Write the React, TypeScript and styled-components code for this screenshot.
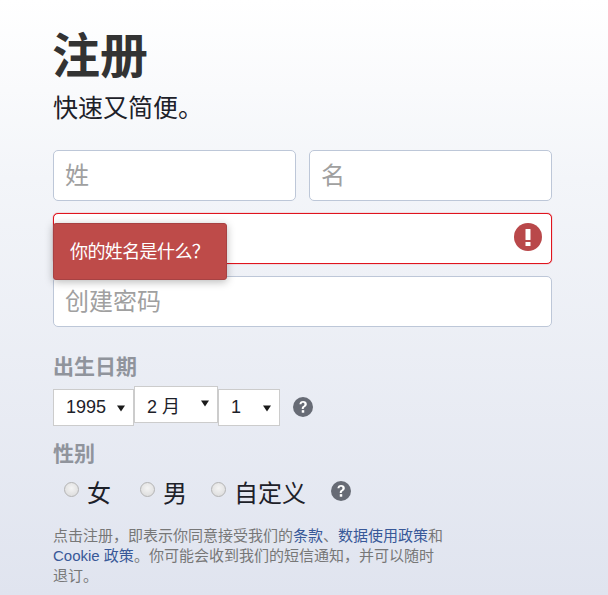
import React from 'react';
import styled, { createGlobalStyle } from 'styled-components';

const GlobalStyle = createGlobalStyle`
  html, body {
    margin: 0;
    padding: 0;
  }

  body {
    font-family: "Liberation Sans", "Noto Sans CJK SC", sans-serif;
  }
`;

const Page = styled.div`
  box-sizing: border-box;
  width: 608px;
  height: 595px;
  overflow: hidden;
  padding: 27px 56px 0 53px;
  background: linear-gradient(#ffffff 0%, #f3f5f9 30%, #e0e4ef 100%);
`;

const Title = styled.h1`
  margin: 0 0 0 -1px;
  font-size: 48px;
  line-height: 60px;
  font-weight: 700;
  color: #333333;
`;

const Subtitle = styled.div`
  margin-top: 3px;
  font-size: 25px;
  line-height: 36px;
  color: #1d2129;
`;

const Fields = styled.div`
  display: flex;
  flex-direction: column;
  gap: 12px;
  margin-top: 24px;
`;

const NameRow = styled.div`
  display: flex;
  gap: 13px;
`;

const FieldWrap = styled.div`
  position: relative;
  flex: 1;
  min-width: 0;
`;

const Input = styled.input<{ $error?: boolean }>`
  display: block;
  box-sizing: border-box;
  width: 100%;
  height: 51px;
  padding: 0 11px;
  border: 1px solid ${(p) => (p.$error ? '#e0141e' : '#bdc7d8')};
  border-radius: 5px;
  background: #ffffff;
  box-shadow: ${(p) => (p.$error ? '0 0 1px #e0141e' : 'none')};
  font-family: inherit;
  font-size: 24px;
  outline: none;

  &::placeholder {
    color: #a0a0a0;
    opacity: 1;
  }
`;

const ErrorIcon = styled.svg`
  position: absolute;
  top: 10px;
  right: 10px;
  width: 28px;
  height: 28px;
`;

const Tooltip = styled.div`
  position: absolute;
  z-index: 1;
  top: 10px;
  left: 0;
  box-sizing: border-box;
  width: 174px;
  height: 57px;
  padding: 0 0 3px 16px;
  display: flex;
  align-items: center;
  border: 1px solid #a74243;
  border-radius: 3px;
  background: #be4b49;
  box-shadow: 0 2px 8px rgba(0, 0, 0, 0.28);
  color: #ffffff;
  font-size: 18px;
  letter-spacing: -0.6px;
`;

const SectionLabel = styled.div<{ $top: number }>`
  margin-top: ${(p) => p.$top}px;
  font-size: 21px;
  line-height: 26px;
  font-weight: 700;
  color: #90949c;
`;

const DateRow = styled.div`
  display: flex;
  align-items: flex-start;
  margin-top: 6px;
`;

const DateSelect = styled.div<{ $width: number; $raised?: boolean }>`
  position: relative;
  box-sizing: border-box;
  width: ${(p) => p.$width}px;
  height: 37px;
  margin-top: ${(p) => (p.$raised ? 0 : 3)}px;
  padding-left: 12px;
  display: flex;
  align-items: center;
  border: 1px solid #cccccc;
  background: #ffffff;
  font-size: 18px;
  color: #1d2129;
`;

const Arrow = styled.svg<{ $raised?: boolean }>`
  position: absolute;
  top: ${(p) => (p.$raised ? 13 : 15)}px;
  right: 8px;
  width: 8px;
  height: 7px;
`;

const HelpIcon = styled.svg`
  width: 20px;
  height: 20px;
  flex: none;
`;

const DateHelp = styled.div`
  display: flex;
  margin: 11px 0 0 13px;
`;

const GenderRow = styled.div`
  display: flex;
  align-items: center;
  height: 30px;
  margin-top: 9px;
  padding-left: 11px;
`;

const GenderOption = styled.label<{ $width: number }>`
  display: flex;
  align-items: center;
  width: ${(p) => p.$width}px;
  font-size: 24px;
  color: #1d2129;
`;

const Radio = styled.input`
  appearance: none;
  box-sizing: border-box;
  width: 15px;
  height: 15px;
  margin: -4px 8px 0 0;
  border: 1px solid #b4b4b4;
  border-radius: 50%;
  background: radial-gradient(circle at 50% 40%, #f4f4f4 0%, #d8d8d8 100%);
`;

const Terms = styled.p`
  width: 392px;
  margin: 20px 0 0;
  font-size: 15px;
  line-height: 20px;
  color: #777777;
`;

const TermsLink = styled.a`
  color: #385898;
  text-decoration: none;
`;

const Help = () => (
  <HelpIcon viewBox="0 0 20 20">
    <circle cx="10" cy="10" r="10" fill="#676b75" />
    <g transform="translate(10 10) scale(1.12) translate(-10 -10)">
      <path
        d="M6.8 7.6C6.9 5.6 8.2 4.6 10.1 4.6c2 0 3.3 1.1 3.3 2.8 0 1.3-.7 2-1.7 2.7-.8.5-1 .9-1 1.7H8.9c-.1-1.3.3-2 1.2-2.6.8-.6 1.2-1 1.2-1.7 0-.7-.5-1.2-1.3-1.2-.9 0-1.3.5-1.4 1.3H6.8z"
        fill="#ffffff"
      />
      <rect x="8.9" y="12.8" width="2.2" height="2.3" fill="#ffffff" />
    </g>
  </HelpIcon>
);

const DownArrow: React.FC<{ raised?: boolean }> = ({ raised }) => (
  <Arrow viewBox="0 0 9 7" $raised={raised}>
    <path d="M0 0h9L4.5 7z" fill="#1a1a1a" />
  </Arrow>
);

const App: React.FC = () => {
  return (
    <Page lang="zh-CN">
      <GlobalStyle />
      <Title>注册</Title>
      <Subtitle>快速又简便。</Subtitle>
      <Fields>
        <NameRow>
          <FieldWrap>
            <Input placeholder="姓" />
          </FieldWrap>
          <FieldWrap>
            <Input placeholder="名" />
          </FieldWrap>
        </NameRow>
        <FieldWrap>
          <Input $error aria-label="手机号或邮箱" />
          <ErrorIcon viewBox="0 0 28 28">
            <circle cx="14" cy="14" r="14" fill="#b9484a" />
            <rect x="11.5" y="6" width="5" height="11" rx="0.5" fill="#ffffff" />
            <rect x="11.5" y="19" width="5" height="4" fill="#ffffff" />
          </ErrorIcon>
          <Tooltip>你的姓名是什么？</Tooltip>
        </FieldWrap>
        <FieldWrap>
          <Input placeholder="创建密码" />
        </FieldWrap>
      </Fields>
      <SectionLabel $top={27}>出生日期</SectionLabel>
      <DateRow>
        <DateSelect $width={81}>
          1995
          <DownArrow />
        </DateSelect>
        <DateSelect $width={84} $raised>
          2 月
          <DownArrow raised />
        </DateSelect>
        <DateSelect $width={62}>
          1
          <DownArrow />
        </DateSelect>
        <DateHelp>
          <Help />
        </DateHelp>
      </DateRow>
      <SectionLabel $top={15}>性别</SectionLabel>
      <GenderRow>
        <GenderOption $width={76}>
          <Radio type="radio" name="gender" />女
        </GenderOption>
        <GenderOption $width={71}>
          <Radio type="radio" name="gender" />男
        </GenderOption>
        <GenderOption $width={120}>
          <Radio type="radio" name="gender" />自定义
        </GenderOption>
        <Help />
      </GenderRow>
      <Terms>
        点击注册，即表示你同意接受我们的<TermsLink>条款</TermsLink>、<TermsLink>数据使用政策</TermsLink>和
        <TermsLink>Cookie 政策</TermsLink>。你可能会收到我们的短信通知，并可以随时退订。
      </Terms>
    </Page>
  );
};

export default App;
